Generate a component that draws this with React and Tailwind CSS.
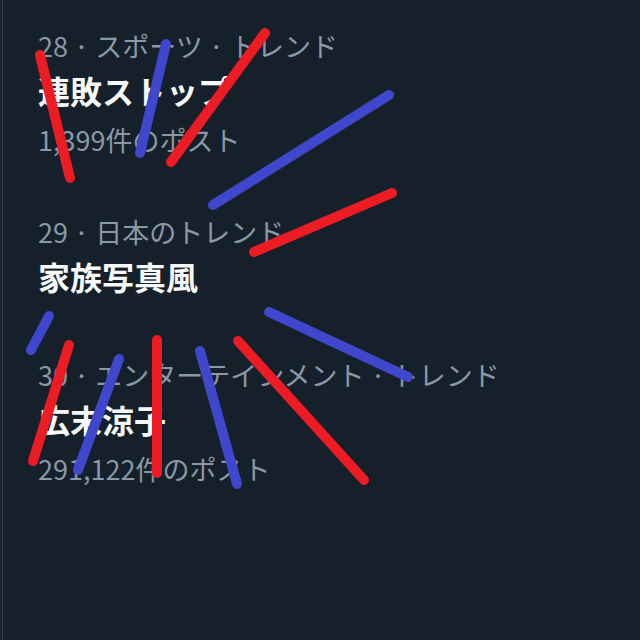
import React from "react";

const items = [
  { cat: "28 · スポーツ · トレンド", title: "連敗ストップ", count: "1,399件のポスト" },
  { cat: "29 · 日本のトレンド", title: "家族写真風", count: null },
  { cat: "30 · エンターテインメント · トレンド", title: "広末涼子", count: "291,122件のポスト" },
];

const red = [
  [40, 55, 70, 178],
  [265, 33, 171, 162],
  [254, 252, 392, 193],
  [69, 345, 33, 461],
  [157, 340, 157, 473],
  [238, 341, 364, 480],
];
const blue = [
  [166, 44, 140, 153],
  [389, 95, 213, 205],
  [49, 316, 31, 350],
  [119, 359, 78, 470],
  [200, 351, 237, 484],
  [269, 312, 408, 377],
];

export default function App() {
  return (
    <div
      className="relative w-[640px] h-[640px] overflow-hidden bg-[#15202b] pl-[2px]"
      style={{ fontFamily: '"Noto Sans CJK JP", "Noto Sans", sans-serif' }}
    >
      <div className="h-full border-l border-[#38444d] pl-[35px]">
        {items.map((it, i) => (
          <div key={i} className="flex flex-col py-[28px]">
            <div className="h-[36px] leading-[36px] text-[27px] text-[#8b98a5] whitespace-nowrap">{it.cat}</div>
            <div className="mt-[4px] h-[47px] leading-[44px] text-[32px] font-bold text-[#f7f9f9] whitespace-nowrap">{it.title}</div>
            {it.count && (
              <div className="mt-[7px] h-[36px] leading-[36px] text-[27px] text-[#8b98a5] whitespace-nowrap">{it.count}</div>
            )}
          </div>
        ))}
      </div>
      <svg className="absolute inset-0" width="640" height="640" viewBox="0 0 640 640">
        {red.map(([x1, y1, x2, y2], i) => (
          <line key={"r" + i} x1={x1} y1={y1} x2={x2} y2={y2} stroke="#ed1c24" strokeWidth="10" strokeLinecap="round" />
        ))}
        {blue.map(([x1, y1, x2, y2], i) => (
          <line key={"b" + i} x1={x1} y1={y1} x2={x2} y2={y2} stroke="#3f48cc" strokeWidth="10" strokeLinecap="round" />
        ))}
      </svg>
    </div>
  );
}
